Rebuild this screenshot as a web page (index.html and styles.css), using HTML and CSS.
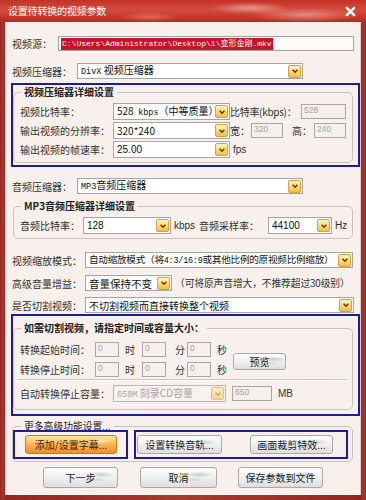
FILE: index.html
```html
<!DOCTYPE html>
<html lang="zh-CN">
<head>
<meta charset="utf-8">
<title>设置待转换的视频参数</title>
<link rel="stylesheet" href="styles.css">
</head>
<body>
<div class="win">
  <div class="titlebar">
    <span class="title">设置待转换的视频参数</span>
    <svg class="close" viewBox="0 0 12 12" width="11" height="11"><path d="M2 2 L10 10 M10 2 L2 10" stroke="#fff" stroke-width="2.6" stroke-linecap="round"/></svg>
  </div>
  <div class="frame">
    <div class="row outer h15">
      <span class="lbl w46">视频源：</span>
      <div class="inp path"><span class="hl">C:\Users\Administrator\Desktop\1\变形金刚.mkv</span></div>
    </div>

    <div class="row outer h16 mt12">
      <span class="lbl w65">视频压缩器：</span>
      <div class="sel w226"><span class="val"><span class="mono">DivX</span> 视频压缩器</span><span class="arr"><svg viewBox="0 0 10 10" width="8" height="8"><path d="M2 3.5 L5 6.5 L8 3.5" fill="none" stroke="#7a2a0c" stroke-width="1.9"/></svg></span></div>
    </div>

    <div class="mark box1">
      <fieldset class="grp">
        <legend>视频压缩器详细设置</legend>
        <div class="row h17">
          <span class="lbl w93">视频比特率：</span>
          <div class="sel w117"><span class="val">528 &nbsp;<span class="mono">kbps</span>（中等质量）</span><span class="arr"><svg viewBox="0 0 10 10" width="8" height="8"><path d="M2 3.5 L5 6.5 L8 3.5" fill="none" stroke="#7a2a0c" stroke-width="1.9"/></svg></span></div>
          <span class="lbl w71 tight">比特率(kbps)：</span>
          <div class="inp dis w45 h15">528</div>
        </div>
        <div class="row h17 mt2">
          <span class="lbl w93">输出视频的分辨率：</span>
          <div class="sel w117"><span class="val">320*240</span><span class="arr"><svg viewBox="0 0 10 10" width="8" height="8"><path d="M2 3.5 L5 6.5 L8 3.5" fill="none" stroke="#7a2a0c" stroke-width="1.9"/></svg></span></div>
          <span class="lbl w21">宽：</span>
          <div class="inp dis w32 h15">320</div>
          <span class="lbl w22 ml9">高：</span>
          <div class="inp dis w32 h15">240</div>
        </div>
        <div class="row h17 mt2">
          <span class="lbl w93">输出视频的帧速率：</span>
          <div class="sel w117"><span class="val mono9">25.00</span><span class="arr"><svg viewBox="0 0 10 10" width="8" height="8"><path d="M2 3.5 L5 6.5 L8 3.5" fill="none" stroke="#7a2a0c" stroke-width="1.9"/></svg></span></div>
          <span class="lbl unit">fps</span>
        </div>
      </fieldset>
    </div>

    <div class="row outer h16 mt11">
      <span class="lbl w65">音频压缩器：</span>
      <div class="sel w226"><span class="val"><span class="mono">MP3</span>音频压缩器</span><span class="arr"><svg viewBox="0 0 10 10" width="8" height="8"><path d="M2 3.5 L5 6.5 L8 3.5" fill="none" stroke="#7a2a0c" stroke-width="1.9"/></svg></span></div>
    </div>

    <fieldset class="grp mp3">
      <legend>MP3音频压缩器详细设置</legend>
      <div class="row h17">
        <span class="lbl w63">音频比特率：</span>
        <div class="sel w88"><span class="val mono9">128</span><span class="arr"><svg viewBox="0 0 10 10" width="8" height="8"><path d="M2 3.5 L5 6.5 L8 3.5" fill="none" stroke="#7a2a0c" stroke-width="1.9"/></svg></span></div>
        <span class="lbl unit w25">kbps</span>
        <span class="lbl w69">音频采样率：</span>
        <div class="sel w64"><span class="val mono9">44100</span><span class="arr"><svg viewBox="0 0 10 10" width="8" height="8"><path d="M2 3.5 L5 6.5 L8 3.5" fill="none" stroke="#7a2a0c" stroke-width="1.9"/></svg></span></div>
        <span class="lbl unit">Hz</span>
      </div>
    </fieldset>

    <div class="row outer h16 mt13">
      <span class="lbl w73">视频缩放模式：</span>
      <div class="sel w268"><span class="val tight2">自动缩放模式（将<span class="mono">4:3/16:9</span>或其他比例的原视频比例缩放）</span><span class="arr"><svg viewBox="0 0 10 10" width="8" height="8"><path d="M2 3.5 L5 6.5 L8 3.5" fill="none" stroke="#7a2a0c" stroke-width="1.9"/></svg></span></div>
    </div>

    <div class="row outer h16 mt7">
      <span class="lbl w73">高级音量增益：</span>
      <div class="sel w87"><span class="val big">音量保持不变</span><span class="arr"><svg viewBox="0 0 10 10" width="8" height="8"><path d="M2 3.5 L5 6.5 L8 3.5" fill="none" stroke="#7a2a0c" stroke-width="1.9"/></svg></span></div>
      <span class="lbl hint">（可将原声音增大，不推荐超过30级别）</span>
    </div>

    <div class="row outer h16 mt6">
      <span class="lbl w73">是否切割视频：</span>
      <div class="sel w269"><span class="val">不切割视频而直接转换整个视频</span><span class="arr"><svg viewBox="0 0 10 10" width="8" height="8"><path d="M2 3.5 L5 6.5 L8 3.5" fill="none" stroke="#7a2a0c" stroke-width="1.9"/></svg></span></div>
    </div>

    <div class="mark box2">
      <fieldset class="grp cut">
        <legend>如需切割视频，请指定时间或容量大小：</legend>
        <div class="timeblock">
          <div class="times">
            <div class="row h16">
              <span class="lbl w75">转换起始时间：</span>
              <div class="inp dis w24 h14">0</div><span class="lbl tu">时</span>
              <div class="inp dis w24 h14">0</div><span class="lbl tu2">分</span>
              <div class="inp dis w24 h14">0</div><span class="lbl tu3">秒</span>
            </div>
            <div class="row h16 mt4">
              <span class="lbl w75">转换停止时间：</span>
              <div class="inp dis w24 h14">0</div><span class="lbl tu">时</span>
              <div class="inp dis w24 h14">0</div><span class="lbl tu2">分</span>
              <div class="inp dis w24 h14">0</div><span class="lbl tu3">秒</span>
            </div>
          </div>
          <button class="btn preview">预览</button>
        </div>
        <div class="sep"></div>
        <div class="row h17">
          <span class="lbl w93">自动转换停止容量：</span>
          <div class="sel w113 off"><span class="val"><span class="mono">650M</span> 刻录CD容量</span><span class="arr"><svg viewBox="0 0 10 10" width="8" height="8"><path d="M2 3.5 L5 6.5 L8 3.5" fill="none" stroke="#c9a46a" stroke-width="1.9"/></svg></span></div>
          <div class="inp dis w40 h15 ml6">650</div>
          <span class="lbl mb">MB</span>
        </div>
      </fieldset>
    </div>

    <fieldset class="grp more">
      <legend>更多高级功能设置...</legend>
      <div class="marks">
        <div class="mark boxa"><button class="btn orange w92">添加/设置字幕...</button></div>
        <div class="mark boxb">
          <button class="btn w85">设置转换音轨...</button>
          <button class="btn w83 ml28">画面裁剪特效...</button>
        </div>
      </div>
    </fieldset>

    <div class="actions">
      <button class="btn act w75">下一步</button>
      <button class="btn act w77">取消</button>
      <button class="btn act w85">保存参数到文件</button>
    </div>
  </div>
</div>
</body>
</html>
```
FILE: styles.css
```css
* { box-sizing: border-box; margin: 0; padding: 0; }
html, body { width: 366px; height: 500px; overflow: hidden; }
body {
  font-family: "Noto Sans CJK SC", "Liberation Sans", sans-serif;
  font-size: 10px;
  color: #2c2c2c;
  background: #fff;
}
.win {
  position: relative;
  width: 366px;
  height: 500px;
  display: flex;
  flex-direction: column;
  background: linear-gradient(90deg, #8f2a22, #a8392e 3px, #8f2a22 5px, #a8392e 50%, #8f2a22 calc(100% - 5px), #a8392e calc(100% - 2px), #8f2a22);
}
.titlebar {
  height: 22px;
  flex: none;
  display: flex;
  align-items: center;
  justify-content: space-between;
  padding: 0 10px 0 8px;
  color: #fff;
  background:
    radial-gradient(ellipse 40px 6px at 250px 8px, rgba(255,215,205,.55), transparent),
    radial-gradient(ellipse 55px 7px at 305px 15px, rgba(255,215,205,.5), transparent),
    radial-gradient(ellipse 30px 5px at 150px 17px, rgba(255,200,190,.35), transparent),
    linear-gradient(#c43127, #d44a3e 45%, #b92a21);
}
.title { font-size: 10px; line-height: 14px; letter-spacing: -0.2px; }
.close { display: block; }

.frame {
  flex: 1;
  margin: 0 5px 5px;
  background: #f7f0ec;
  padding: 14px 1px 0 6px;
  display: flex;
  flex-direction: column;
  box-shadow: inset 1px 0 0 #e6cfc8, inset -1px 0 0 #e6cfc8;
}

.row { display: flex; align-items: center; white-space: nowrap; }
.outer { padding-left: 1px; }
.h14 { height: 14px; } .h15 { height: 15px; } .h16 { height: 16px; } .h17 { height: 17px; }
.mt2 { margin-top: 2px; } .mt4 { margin-top: 4px; } .mt6 { margin-top: 6px; } .mt7 { margin-top: 7px; }
.mt11 { margin-top: 11px; } .mt12 { margin-top: 12px; } .mt13 { margin-top: 13px; }
.ml6 { margin-left: 6px; } .ml9 { margin-left: 9px; } .ml28 { margin-left: 28px; }

.lbl { flex: none; line-height: 13px; color: #333; }
.tight { letter-spacing: -0.3px; }
.w21 { width: 21px; } .w22 { width: 22px; } .w24 { width: 24px; } .w25 { width: 25px; }
.w32 { width: 32px; } .w40 { width: 40px; } .w45 { width: 45px; } .w46 { width: 46px; }
.w63 { width: 63px; } .w64 { width: 64px; } .w65 { width: 65px; } .w69 { width: 69px; }
.w71 { width: 71px; } .w73 { width: 73px; } .w75 { width: 75px; } .w77 { width: 77px; }
.w83 { width: 83px; } .w85 { width: 85px; } .w87 { width: 87px; } .w88 { width: 88px; }
.w92 { width: 92px; } .w93 { width: 93px; } .w113 { width: 113px; } .w117 { width: 117px; }
.w226 { width: 226px; } .w268 { width: 268px; } .w269 { width: 269px; }

.unit { margin-left: 3px; font-family: "Liberation Sans", sans-serif; font-size: 10px; color: #333; }
.hint { margin-left: 3px; font-size: 9.8px; letter-spacing: -0.15px; color: #333; }
.mb { margin-left: 6px; font-family: "Liberation Sans", sans-serif; font-size: 10px; }

.mono { font-family: "Liberation Mono", "Noto Sans CJK SC", monospace; font-size: 8.5px; }
.mono9 { font-family: "Liberation Sans", sans-serif; font-size: 9.5px; }

.inp {
  flex: none;
  height: 15px;
  border: 1px solid #a4a2a2;
  background: #fff;
  display: flex;
  align-items: center;
  padding-left: 2px;
}
.path { width: 296px; background: #fdfbfa; }
.hl {
  font-family: "Liberation Mono", "Noto Sans CJK SC", monospace;
  font-size: 8px;
  line-height: 12px;
  background: #c8132a;
  color: #fff;
  padding: 0 1px;
}
.dis {
  background: #f5f0ed;
  border-color: #a9a7a6;
  color: #a5a3a3;
  font-family: "Liberation Sans", sans-serif;
  font-size: 8.5px;
  align-items: flex-start;
  line-height: 10px;
  padding: 0 0 0 2px;
}

.sel {
  flex: none;
  height: 100%;
  border: 1px solid #a6a5a8;
  background: #fff;
  display: flex;
  align-items: center;
  justify-content: space-between;
  padding: 0 1px 0 3px;
}
.sel .val {
  line-height: 13px;
  font-size: 10px;
  color: #111;
  min-width: 0;
}
.sel .val.tight2 { font-size: 9.6px; letter-spacing: -0.25px; }
.sel .val.big { font-size: 10.5px; }
.sel.off { background: #f7f2ef; border-color: #b8b6b6; }
.sel.off .val { color: #a8a6a6; }
.sel.off .arr { background: linear-gradient(#fbeec4, #f2d78e); border-color: #e0c07a; }

.arr {
  flex: none;
  width: 13px;
  height: 13px;
  border: 1px solid #d4a23e;
  border-radius: 2px;
  background: linear-gradient(#fff5c2, #f7d874 55%, #efc04a);
  display: flex;
  align-items: center;
  justify-content: center;
}
.arr svg { display: block; }

.mark { border: 2px solid #1d1f8c; flex: none; }
.box1 { margin-top: 4px; width: 349px; padding-right: 5px; }
.box2 { margin-top: 1px; width: 349px; padding-right: 5px; }

.grp {
  border: 1px solid #c6c1bf;
  border-radius: 5px;
  padding: 4px 0 4px 6px;
  min-width: 0;
}
.grp legend {
  font-size: 10px;
  font-weight: bold;
  line-height: 14px;
  padding: 0 3px;
  margin-left: 1px;
  color: #222;
}
.box1 .grp { margin-bottom: 2px; }
.mp3 { margin-top: 5px; margin-left: 2px; width: 340px; padding-bottom: 4px; }

.cut { margin-top: 5px; margin-bottom: 4px; padding: 6px 0 7px 6px; }
.timeblock { display: flex; align-items: center; }
.times { display: flex; flex-direction: column; }
.tu { width: 23px; padding-left: 6px; }
.tu2 { width: 21px; padding-left: 9px; }
.tu3 { width: 22px; padding-left: 6px; }
.preview { width: 53px; height: 17px; margin-top: 4px; }
.sep {
  height: 2px;
  margin: 2px 5px 4px -2px;
  border-top: 1px solid #c9c4c2;
  border-bottom: 1px solid #fff;
}

.more {
  margin-top: 4px;
  margin-left: 1px;
  width: 341px;
  padding: 0 0 2px 0;
}
.more legend {
  font-weight: normal;
  line-height: 12px;
  margin-left: 8px;
  font-size: 9.8px;
}
.marks { display: flex; margin-top: -2px; }
.boxa { width: 115px; height: 29px; display: flex; align-items: center; padding-left: 10px; }
.boxb { width: 214px; height: 29px; margin-left: 6px; display: flex; align-items: center; padding-left: 1px; }
.boxa .btn, .boxb .btn { height: 19px; }

.btn {
  flex: none;
  font-family: "Noto Sans CJK SC", sans-serif;
  font-size: 10px;
  color: #222;
  border: 1px solid #a9a9a9;
  border-radius: 3px;
  background:
    radial-gradient(ellipse 14px 3px at 78% 35%, rgba(150,150,150,.45), transparent),
    radial-gradient(ellipse 10px 2px at 70% 62%, rgba(160,160,160,.35), transparent),
    linear-gradient(#ffffff, #f1f1f1 45%, #dedede);
  line-height: 13px;
  cursor: default;
}
.orange {
  border-color: #c77a2f;
  color: #3a2410;
  background:
    radial-gradient(ellipse 14px 3px at 80% 30%, rgba(255,255,230,.6), transparent),
    linear-gradient(#fde7a8, #f9b95a 45%, #f28d28);
}

.actions { display: flex; margin-top: 5px; padding-left: 32px; gap: 22px; }
.act { height: 21px; }
.actions .act:nth-child(3) { margin-left: -1px; }
```
